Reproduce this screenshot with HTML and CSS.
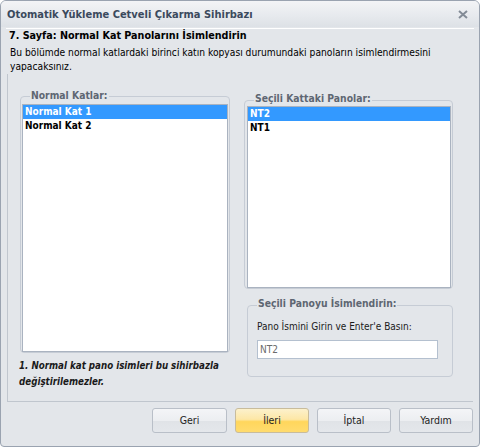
FILE: index.html
```html
<!DOCTYPE html>
<html lang="tr">
<head>
<meta charset="utf-8">
<link rel="stylesheet" href="styles.css">
</head>
<body>
<div class="window">
  <div class="titlebar">
    <span class="title">Otomatik Yükleme Cetveli Çıkarma Sihirbazı</span>
    <svg class="close" width="10" height="9" viewBox="0 0 10 9"><path d="M1 1 L9 8 M9 1 L1 8" stroke="#838b96" stroke-width="2" fill="none"/></svg>
  </div>
  <div class="header">
    <div class="heading">7. Sayfa: Normal Kat Panolarını İsimlendirin</div>
    <div class="desc">Bu bölümde normal katlardaki birinci katın kopyası durumundaki panoların isimlendirmesini<br>yapacaksınız.</div>
  </div>
  <div class="panel">
    <div class="col-left">
      <div class="group group-left">
        <span class="legend">Normal Katlar:</span>
        <ul class="list list-left">
          <li class="sel">Normal Kat 1</li>
          <li>Normal Kat 2</li>
        </ul>
      </div>
      <p class="note">1. Normal kat pano isimleri bu sihirbazla<br>değiştirilemezler.</p>
    </div>
    <div class="col-right">
      <div class="group group-right">
        <span class="legend">Seçili Kattaki Panolar:</span>
        <ul class="list list-right">
          <li class="sel">NT2</li>
          <li>NT1</li>
        </ul>
      </div>
      <div class="group group-rename">
        <span class="legend">Seçili Panoyu İsimlendirin:</span>
        <div class="label">Pano İsmini Girin ve Enter'e Basın:</div>
        <div class="input">NT2</div>
      </div>
    </div>
  </div>
  <div class="buttons">
    <div class="btn">Geri</div>
    <div class="btn btn-active">İleri</div>
    <div class="btn">İptal</div>
    <div class="btn">Yardım</div>
  </div>
</div>
</body>
</html>
```
FILE: styles.css
```css
* { box-sizing: border-box; }
html, body { margin: 0; padding: 0; background: #ffffff; }
body {
  font-family: "DejaVu Sans Condensed", "DejaVu Sans", sans-serif;
  font-stretch: condensed;
  font-size: 10px;
  color: #000;
}
.window {
  width: 480px;
  height: 447px;
  border: 1px solid #9aa3b0;
  border-radius: 6px 6px 4px 4px;
  background: #e3e6ea;
  display: flex;
  flex-direction: column;
  overflow: hidden;
}
.titlebar {
  height: 26px;
  flex: none;
  display: flex;
  align-items: center;
  justify-content: space-between;
  padding: 0 11px 0 6px;
  background: linear-gradient(#f3f4f6, #e6e9ed 60%, #dde1e6);
}
.title {
  font-weight: bold;
  font-size: 11px;
  color: #3b4a5d;
}
.close { display: block; margin-top: 1px; }
.header {
  margin: 1px 5px 0 5px;
  border-top: 1px solid #ffffff;
  padding-left: 3px;
  flex: none;
}
.heading {
  font-weight: bold;
  font-size: 10.7px;
  line-height: 14px;
}
.desc {
  margin-top: 3px;
  line-height: 14px;
  padding-left: 1px;
  font-size: 10.2px;
}
.panel {
  flex: none;
  height: 328px;
  margin: 0 6px 0 6px;
  border-left: 1px solid #c0c6ce;
  border-bottom: 1px solid #c0c6ce;
  padding: 22px 0 0 12px;
  display: grid;
  grid-template-columns: 210px 209px;
  column-gap: 14px;
  align-items: start;
}
.group {
  position: relative;
  border: 1px solid #c6ccd5;
  border-radius: 4px;
}
.legend {
  position: absolute;
  left: 9px;
  padding: 0 1px;
  line-height: 14px;
  font-weight: bold;
  font-size: 10.3px;
  color: #5e6672;
  background: #e3e6ea;
  white-space: nowrap;
}
.group-left { height: 257px; padding: 7px 1px 0 1px; }
.group-left .legend { top: -9px; }
.list {
  list-style: none;
  margin: 0;
  padding: 0;
  background: #ffffff;
  border: 1px solid #aab3c0;
}
.list li {
  line-height: 14px;
  height: 14px;
  padding-left: 2px;
  font-weight: bold;
}
.list li.sel { background: #3399ff; color: #ffffff; }
.list-left { height: 248px; }
.note {
  margin: 5px 0 0 -1px;
  line-height: 16px;
  font-style: italic;
  font-weight: bold;
  font-size: 9.7px;
  color: #1a1a1a;
}
.col-right { margin-top: 4px; }
.group-right { height: 189px; padding: 5px 1px 0 2px; }
.group-right .legend { top: -10px; }
.list-right { height: 182px; }
.group-rename {
  margin: 16px 0 0 3px;
  height: 72px;
  padding: 14px 0 0 9px;
}
.group-rename .legend { top: -10px; }
.label { line-height: 14px; color: #1a1a1a; }
.input {
  margin-top: 6px;
  width: 181px;
  height: 19px;
  border: 1px solid #b4c0cf;
  background: #ffffff;
  color: #6b6b6b;
  line-height: 17px;
  padding-left: 2px;
}
.buttons {
  flex: none;
  display: flex;
  justify-content: flex-end;
  gap: 8px;
  margin: 6px 6px 0 0;
}
.btn {
  width: 74px;
  height: 25px;
  border: 1px solid #b9bfc8;
  border-radius: 3px;
  background: linear-gradient(#f4f5f7, #eceef1 50%, #e0e3e7 52%, #e4e7eb);
  text-align: center;
  line-height: 23px;
  font-size: 10.5px;
  color: #1e1e1e;
}
.btn:first-child { width: 75px; }
.btn-active {
  border-color: #c8bc9c;
  background: linear-gradient(#fcf1cc, #fde7a6 45%, #ffd65c 55%, #ffdb6e);
}
```
